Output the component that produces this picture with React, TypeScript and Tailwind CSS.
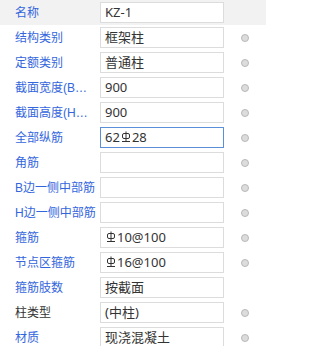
import React from "react"

type Row = {
  label: string
  value: string
  labelColor?: string
  dot?: boolean
  focused?: boolean
  shaded?: boolean
}

const rows: Row[] = [
  { label: "名称", value: "KZ-1", dot: false, shaded: true },
  { label: "结构类别", value: "框架柱" },
  { label: "定额类别", value: "普通柱" },
  { label: "截面宽度(B边)(mm)", value: "900" },
  { label: "截面高度(H边)(mm)", value: "900" },
  { label: "全部纵筋", value: "62|28", focused: true },
  { label: "角筋", value: "" },
  { label: "B边一侧中部筋", value: "" },
  { label: "H边一侧中部筋", value: "" },
  { label: "箍筋", value: "|10@100" },
  { label: "节点区箍筋", value: "|16@100" },
  { label: "箍筋肢数", value: "按截面", dot: false },
  { label: "柱类型", value: "(中柱)", labelColor: "black" },
  { label: "材质", value: "现浇混凝土" },
]

function RebarMark() {
  // HRB400 steel grade symbol
  return (
    <svg width="10" height="12" viewBox="0 0 10 12" className="inline-block mx-[1px] -mt-[2px]">
      <path d="M5 0.5V11" stroke="#333" strokeWidth="1" fill="none" />
      <rect x="1.5" y="2.5" width="7" height="5" rx="1.5" stroke="#333" strokeWidth="1" fill="none" />
      <path d="M1 10.5H9" stroke="#333" strokeWidth="1" fill="none" />
    </svg>
  )
}

function Value({ text }: { text: string }) {
  const parts = text.split("|")
  return (
    <span className="flex items-center whitespace-nowrap">
      {parts.map((p, i) => (
        <React.Fragment key={i}>
          {i > 0 && <RebarMark />}
          {p}
        </React.Fragment>
      ))}
    </span>
  )
}

export default function App() {
  return (
    <div
      className="w-[266px] h-[346px] overflow-hidden bg-white"
      style={{ fontFamily: '"Noto Sans", "Noto Sans CJK SC", sans-serif' }}
    >
      {rows.map((r) => (
        <div key={r.label} className={`flex items-center h-[25px] ${r.shaded ? "bg-[#f2f2f2]" : ""}`}>
          <div className="w-[100px] pl-[15px] pr-[4px] shrink-0">
            <div
              className={`truncate text-[12px] leading-[16px] font-['Liberation_Sans','Noto_Sans_CJK_SC',sans-serif] ${
                r.labelColor === "black" ? "text-[#333333]" : "text-[#3366dd]"
              }`}
            >
              {r.label}
            </div>
          </div>
          <div
            className={`w-[124px] h-[21px] shrink-0 bg-white border pl-[4px] flex items-center text-[13px] text-[#333333] ${
              r.focused ? "border-[#5b8fd9]" : "border-[#dcdcdc]"
            }`}
          >
            <Value text={r.value} />
          </div>
          <div className="flex-1 flex justify-center">
            {r.dot !== false && (
              <span className="w-[8px] h-[8px] rounded-full bg-[#dcdcdc] border border-[#b8b8b8]" />
            )}
          </div>
        </div>
      ))}
    </div>
  )
}
